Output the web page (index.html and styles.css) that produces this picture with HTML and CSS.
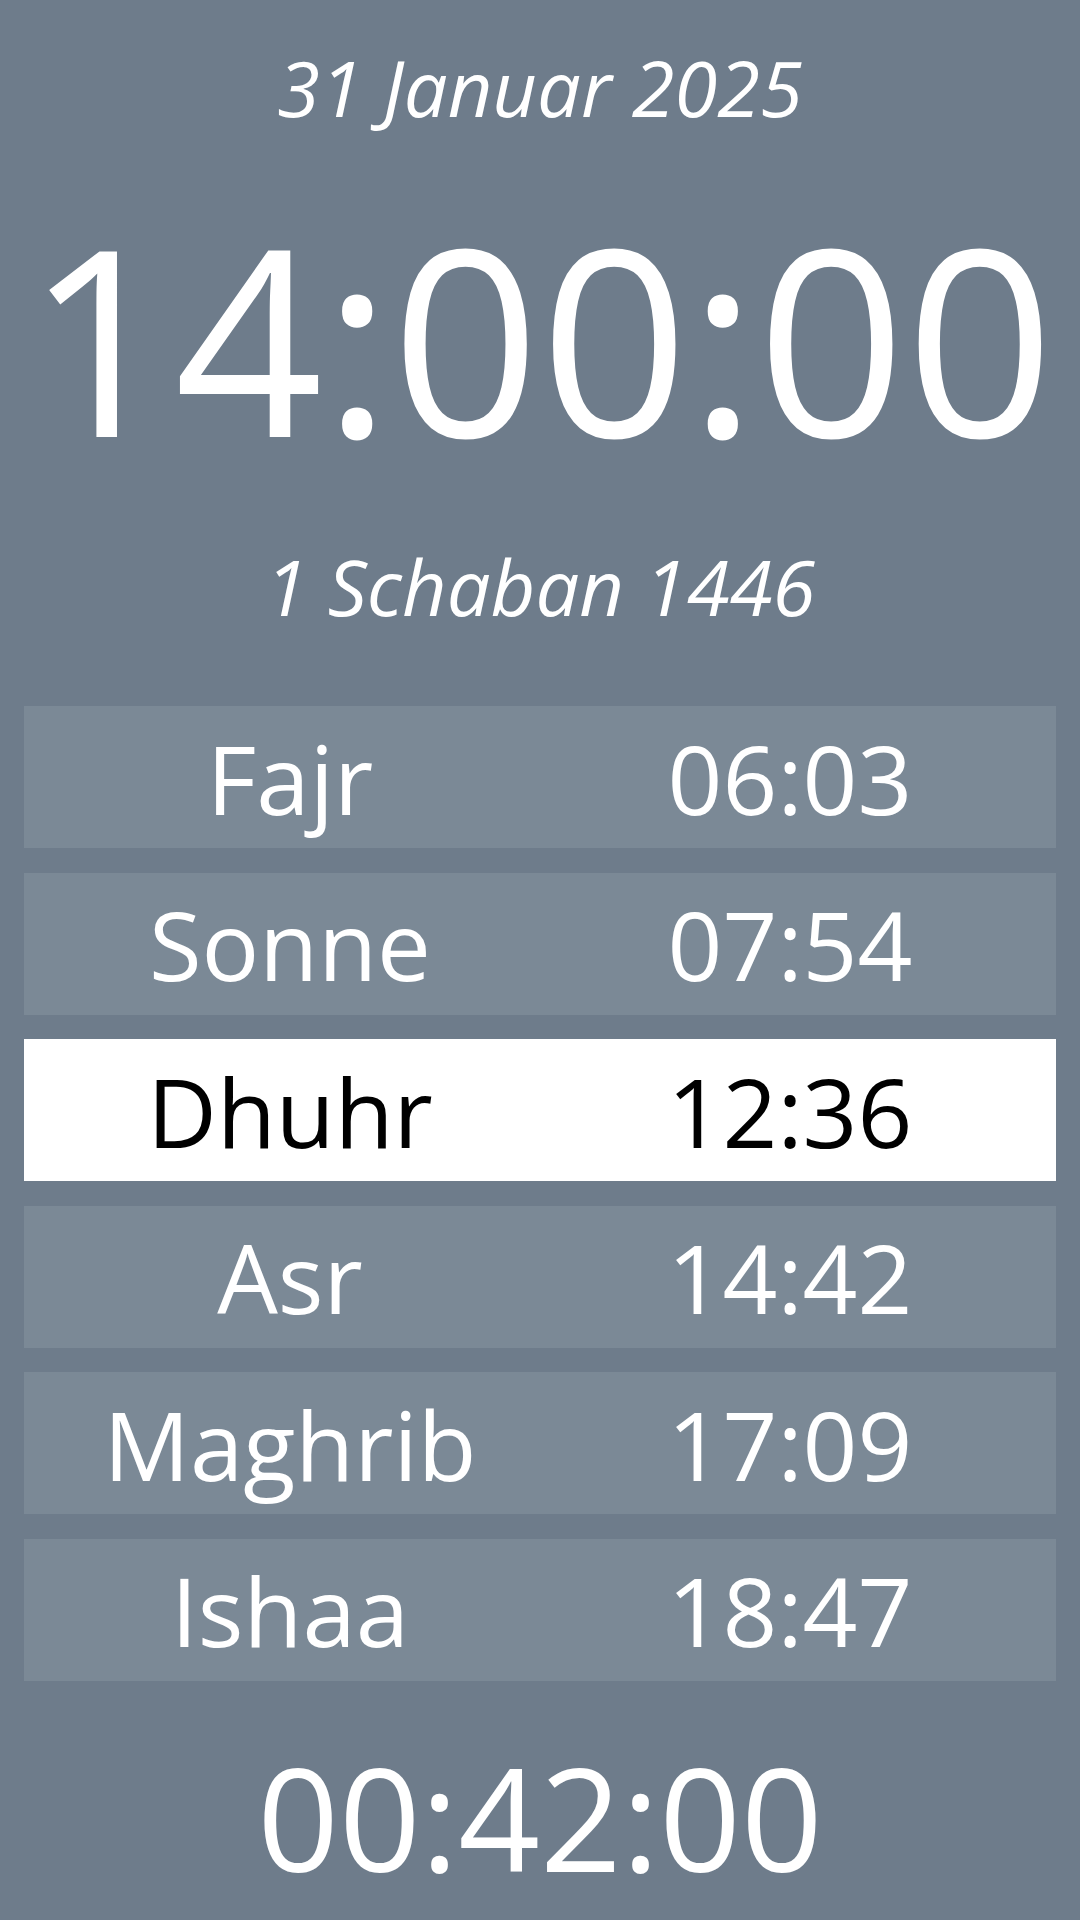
FILE: index.html
```html
<!DOCTYPE html>
<html lang="de">
<head>
<meta charset="utf-8">
<title>Gebetszeiten</title>
<link rel="stylesheet" href="styles.css">
</head>
<body>
<main class="screen">
  <div class="date">31 Januar 2025</div>
  <div class="clock">14:00:00</div>
  <div class="hijri">1 Schaban 1446</div>
  <section class="prayers">
    <div class="row"><span class="name">Fajr</span><span class="time">06:03</span></div>
    <div class="row"><span class="name">Sonne</span><span class="time">07:54</span></div>
    <div class="row row-active"><span class="name">Dhuhr</span><span class="time">12:36</span></div>
    <div class="row"><span class="name">Asr</span><span class="time">14:42</span></div>
    <div class="row"><span class="name">Maghrib</span><span class="time">17:09</span></div>
    <div class="row"><span class="name">Ishaa</span><span class="time">18:47</span></div>
  </section>
  <div class="countdown">00:42:00</div>
</main>
</body>
</html>
```
FILE: styles.css
```css
html, body {
  margin: 0;
  padding: 0;
  background: #6e7c8b;
}
body {
  width: 1080px;
  height: 1920px;
  overflow: hidden;
  font-family: "Open Sans", "Noto Sans", sans-serif;
  color: #ffffff;
}
.screen {
  display: flex;
  flex-direction: column;
  align-items: center;
  padding-top: 34px;
}
.date, .hijri {
  font-style: italic;
  font-size: 77.6px;
  line-height: 106px;
}
.clock {
  font-size: 260px;
  line-height: 354px;
  margin-top: 19px;
}
.hijri {
  margin-top: 19px;
  line-height: 108px;
}
.prayers {
  margin-top: 66px;
  width: 1032px;
  display: flex;
  flex-direction: column;
  gap: 24.6px;
}
.row {
  height: 142px;
  padding: 0 16px;
  background: #7b8996;
  display: flex;
  align-items: center;
  font-size: 96px;
}
.row-active {
  background: #ffffff;
  color: #000000;
}
.name, .time {
  flex: 1 1 0;
  text-align: center;
  line-height: 131px;
}
.countdown {
  margin-top: 38px;
  font-size: 143px;
  line-height: 195px;
}
```
